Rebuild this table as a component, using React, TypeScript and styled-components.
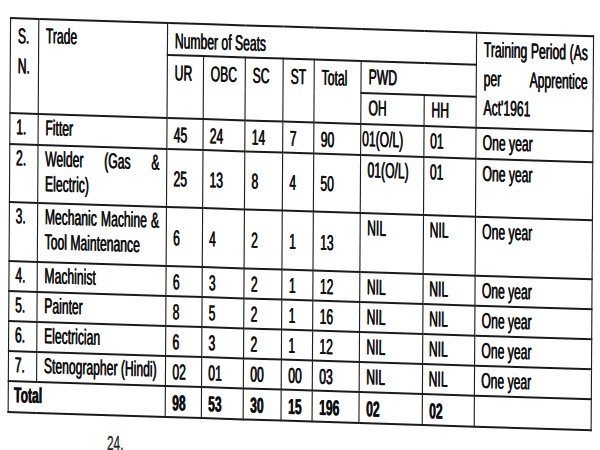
import React from "react";
import styled, { createGlobalStyle, css } from "styled-components";

const SX = 0.565;
const u = (d: number) => `${(d / SX).toFixed(2)}px`;

const GlobalStyle = createGlobalStyle`
  html, body { margin: 0; padding: 0; background: #ffffff; overflow: hidden; }
  body { font-family: "Liberation Sans", Arial, sans-serif; }
`;

const Page = styled.div`
  width: 600px;
  height: 450px;
  padding: 17px 0 0 10px;
  box-sizing: border-box;
  overflow: hidden;
`;

const Sheet = styled.div`
  width: ${u(583)};
  transform-origin: 0 0;
  transform: rotate(0.35deg) skewY(1.45deg) scaleX(${SX});
`;

const Table = styled.table`
  width: 100%;
  border-collapse: collapse;
  table-layout: fixed;
  font-family: "Liberation Sans", Arial, sans-serif;
  font-size: 21.5px;
  color: #0e0e0e;
  -webkit-text-stroke: 0.35px #0e0e0e;
  text-shadow: 0.6px 0 0 #0e0e0e;
`;

const Row = styled.tr<{ $h: number }>`
  height: ${(p) => p.$h}px;
`;

const lines = css`
  border-top: 2px solid #1a1a1a;
  border-bottom: 2px solid #1a1a1a;
  border-left: 2.8px solid #1f1f1f;
  border-right: 2.8px solid #1f1f1f;
  box-sizing: border-box;
`;

const Head = styled.th<{ $justify?: boolean; $lh?: number; $pt?: number }>`
  ${lines}
  vertical-align: top;
  text-align: ${(p) => (p.$justify ? "justify" : "left")};
  font-weight: 400;
  line-height: ${(p) => p.$lh ?? 24}px;
  padding: ${(p) => p.$pt ?? 4}px 9px 0 12px;
  overflow: hidden;
`;

type Align = "top" | "mid";

const Cell = styled.td<{
  $v?: Align;
  $pt?: number;
  $pl?: number;
  $bold?: boolean;
  $justify?: boolean;
}>`
  ${lines}
  vertical-align: ${(p) => (p.$v === "mid" ? "middle" : "top")};
  text-align: ${(p) => (p.$justify ? "justify" : "left")};
  font-weight: ${(p) => (p.$bold ? 700 : 400)};
  line-height: 25px;
  padding: ${(p) => p.$pt ?? 1}px 12px 0 ${(p) => p.$pl ?? 12}px;
  white-space: normal;
  overflow: hidden;
`;

const Note = styled.div`
  margin-top: 16px;
  padding-left: ${u(97)};
  font-size: 21px;
  line-height: 27px;
  color: #222;
  -webkit-text-stroke: 0.35px #222;
  transform-origin: 0 0;
  transform: scaleX(${SX});
  white-space: nowrap;
`;

const colWidths = [28, 129, 36, 42, 38, 31, 47, 63, 52, 117];

type DataRow = {
  sn: string;
  trade: string;
  seats: string[];
  oh: string;
  hh: string;
  tp: string;
  h: number;
  ohPad?: number;
};

const rows: DataRow[] = [
  { sn: "1.", trade: "Fitter", seats: ["45", "24", "14", "7", "90"], oh: "01(O/L)", hh: "01", tp: "One year", h: 31, ohPad: 1 },
  { sn: "2.", trade: "Welder (Gas & Electric)", seats: ["25", "13", "8", "4", "50"], oh: "01(O/L)", hh: "01", tp: "One year", h: 58 },
  { sn: "3.", trade: "Mechanic Machine & Tool Maintenance", seats: ["6", "4", "2", "1", "13"], oh: "NIL", hh: "NIL", tp: "One year", h: 59 },
  { sn: "4.", trade: "Machinist", seats: ["6", "3", "2", "1", "12"], oh: "NIL", hh: "NIL", tp: "One year", h: 30 },
  { sn: "5.", trade: "Painter", seats: ["8", "5", "2", "1", "16"], oh: "NIL", hh: "NIL", tp: "One year", h: 30 },
  { sn: "6.", trade: "Electrician", seats: ["6", "3", "2", "1", "12"], oh: "NIL", hh: "NIL", tp: "One year", h: 29 },
  { sn: "7.", trade: "Stenographer (Hindi)", seats: ["02", "01", "00", "00", "03"], oh: "NIL", hh: "NIL", tp: "One year", h: 30 },
];

const totals = ["98", "53", "30", "15", "196", "02", "02"];

export default function App() {
  return (
    <>
      <GlobalStyle />
      <Page>
        <Sheet>
          <Table>
            <colgroup>
              {colWidths.map((w, i) => (
                <col key={i} style={{ width: u(w) }} />
              ))}
            </colgroup>
            <thead>
              <Row $h={32}>
                <Head rowSpan={3} $lh={30} $pt={2}>
                  S.
                  <br />
                  N.
                </Head>
                <Head rowSpan={3}>Trade</Head>
                <Head colSpan={7} $pt={5}>Number of Seats</Head>
                <Head rowSpan={3} $justify $lh={29} $pt={2}>
                  Training Period (As per Apprentice Act'1961
                </Head>
              </Row>
              <Row $h={32}>
                <Head rowSpan={2} $pt={5}>UR</Head>
                <Head rowSpan={2} $pt={5}>OBC</Head>
                <Head rowSpan={2} $pt={5}>SC</Head>
                <Head rowSpan={2} $pt={5}>ST</Head>
                <Head rowSpan={2} $pt={5}>Total</Head>
                <Head colSpan={2} $pt={3}>PWD</Head>
              </Row>
              <Row $h={31}>
                <Head $pt={2}>OH</Head>
                <Head $pt={2}>HH</Head>
              </Row>
            </thead>
            <tbody>
              {rows.map((r) => (
                <Row key={r.sn} $h={r.h}>
                  <Cell $pl={10}>{r.sn}</Cell>
                  <Cell $justify>{r.trade}</Cell>
                  {r.seats.map((s, i) => (
                    <Cell key={i} $v="mid" $pt={3} $pl={11}>
                      {s}
                    </Cell>
                  ))}
                  <Cell $pt={2} $pl={r.ohPad ?? 11}>
                    {r.oh}
                  </Cell>
                  <Cell $pt={2} $pl={10}>
                    {r.hh}
                  </Cell>
                  <Cell $pt={2} $pl={11}>
                    {r.tp}
                  </Cell>
                </Row>
              ))}
              <Row $h={31}>
                <Cell colSpan={2} $bold $pl={9}>
                  Total
                </Cell>
                {totals.map((t, i) => (
                  <Cell key={i} $bold $v="mid" $pt={3} $pl={11}>
                    {t}
                  </Cell>
                ))}
                <Cell />
              </Row>
            </tbody>
          </Table>
        </Sheet>
        <Note>24.</Note>
      </Page>
    </>
  );
}
